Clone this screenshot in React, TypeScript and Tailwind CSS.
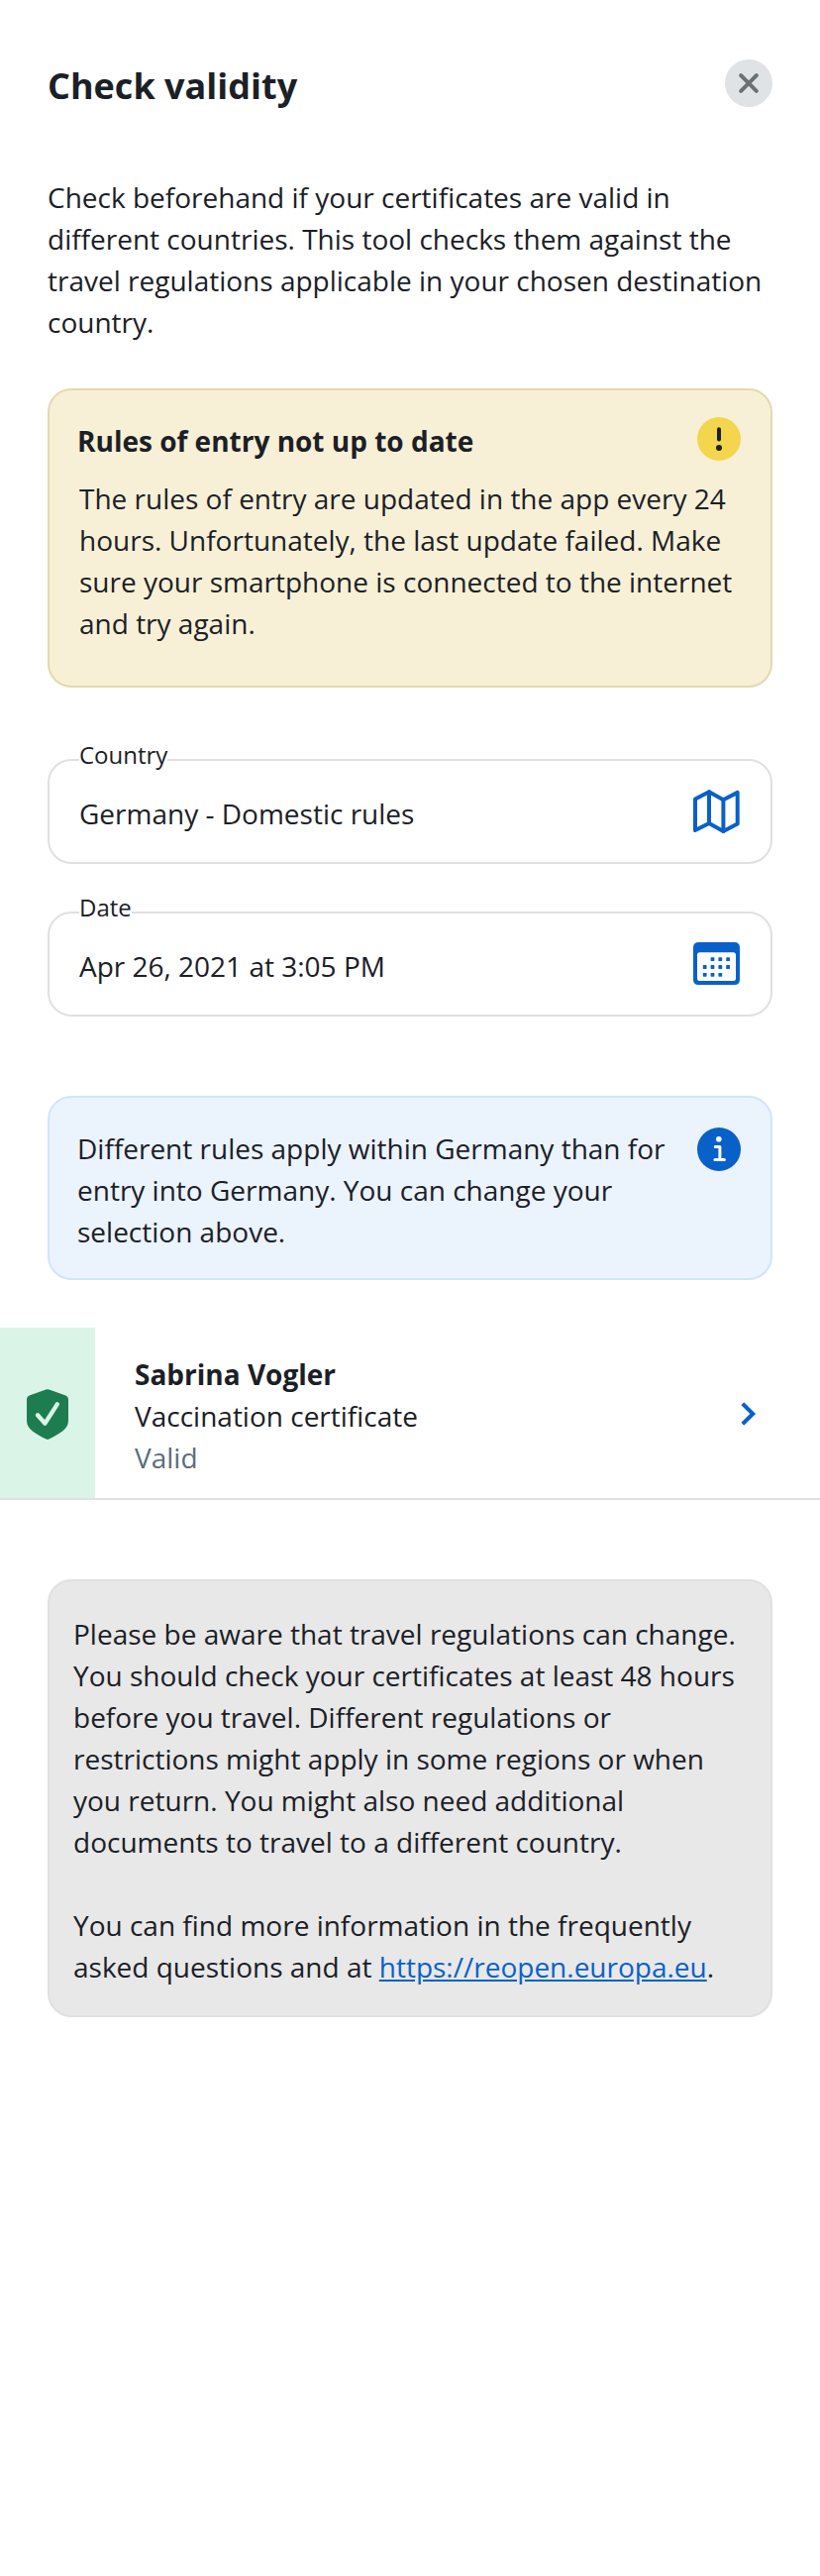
import React from "react";

function CloseIcon() {
  return (
    <svg width="48" height="48" viewBox="0 0 48 48" fill="none">
      <path d="M16.2 16.2 L31.8 31.8 M31.8 16.2 L16.2 31.8" stroke="#6a7271" strokeWidth="4" strokeLinecap="round" />
    </svg>
  );
}

function WarningIcon() {
  return (
    <svg className="shrink-0" width="44" height="44" viewBox="0 0 44 44">
      <circle cx="22" cy="22" r="22" fill="#f3d54e" />
      <rect x="20" y="10.2" width="4" height="14.2" rx="2" fill="#1b2026" />
      <circle cx="22" cy="31" r="3" fill="#1b2026" />
    </svg>
  );
}

function InfoIcon() {
  return (
    <svg className="shrink-0" width="44" height="44" viewBox="0 0 44 44">
      <circle cx="22" cy="22" r="22" fill="#0861c8" />
      <circle cx="21.8" cy="11.7" r="2.8" fill="#fff" />
      <path d="M18.3 19.6 H22.9 V32.4 M17.9 32.4 H27.4" fill="none" stroke="#fff" strokeWidth="3" strokeLinecap="round" strokeLinejoin="round" />
    </svg>
  );
}

function MapIcon() {
  return (
    <svg className="shrink-0" width="48" height="46" viewBox="0 0 48 46" fill="none" stroke="#0861c8" strokeWidth="4" strokeLinejoin="round" strokeLinecap="round">
      <path d="M2 9.6 L16 2.3 L30.4 10.3 L44.7 2.9 V34.4 L30.4 42 L16 34 L2 41 Z" />
      <path d="M16 2.3 V34 M30.4 10.3 V42" />
    </svg>
  );
}

const calendarDots = [
  [19.5, 17], [27.3, 17], [35.1, 17],
  [11.7, 24.8], [19.5, 24.8], [27.3, 24.8], [35.1, 24.8],
  [11.7, 32.6], [19.5, 32.6], [27.3, 32.6],
];

function CalendarIcon() {
  return (
    <svg className="shrink-0" width="48" height="46" viewBox="0 0 48 46">
      <path fillRule="evenodd" fill="#0861c8" d="M5.5 0 H41.5 Q47 0 47 5.5 V37.5 Q47 43 41.5 43 H5.5 Q0 43 0 37.5 V5.5 Q0 0 5.5 0 Z M6.5 10.3 Q4 10.3 4 12.8 V36.5 Q4 39 6.5 39 H40.5 Q43 39 43 36.5 V12.8 Q43 10.3 40.5 10.3 Z" />
      {calendarDots.map(([x, y]) => (
        <rect key={x + "-" + y} x={x - 1.9} y={y - 1.7} width="3.8" height="3.8" rx="0.6" fill="#0861c8" />
      ))}
    </svg>
  );
}

function ShieldIcon() {
  return (
    <svg width="42" height="51" viewBox="0 0 42 51">
      <path fill="#1e7d50" d="M19.4 0.5 Q21 -0.1 22.6 0.5 L39.4 6.6 Q42 7.6 42 10.2 V32 C42 41 32 45.5 22.4 50.5 Q21 51.2 19.6 50.5 C10 45.5 0 41 0 32 V10.2 Q0 7.6 2.6 6.6 Z" />
      <path d="M11 26.3 L18.4 34.6 L30.8 15.4" fill="none" stroke="#daf5e7" strokeWidth="4.4" strokeLinecap="round" strokeLinejoin="round" />
    </svg>
  );
}

function Field({ label, value, icon }: { label: string; value: string; icon: React.ReactNode }) {
  return (
    <div className="relative flex h-[106px] items-start justify-between rounded-3xl border-2 border-[#e0e0e0] pr-[30px] pl-[30px] pt-[29px]">
      <span className="absolute -top-6 left-[30px] bg-white text-[24px] leading-[36px]">{label}</span>
      <span className="pt-[3px]">{value}</span>
      {icon}
    </div>
  );
}

export default function App() {
  return (
    <main className="min-h-[2600px] w-[828px] bg-white pt-[60px] font-['Open_Sans',sans-serif] text-[28px] leading-[42px] text-[#1b2026]">
      <header className="flex h-[118px] items-start justify-between px-12">
        <h1 className="text-[36px] leading-[54px] font-bold">Check validity</h1>
        <button aria-label="Close" className="h-12 w-12 rounded-full bg-[#dfe3e6]">
          <CloseIcon />
        </button>
      </header>

      <div className="px-12">
        <p>
          Check beforehand if your certificates are valid in<br />
          different countries. This tool checks them against the<br />
          travel regulations applicable in your chosen destination<br />
          country.
        </p>

        <section className="mt-[46px] h-[302px] rounded-3xl border-2 border-[#e3d9ae] bg-[#f8f0d6] pt-[27px] pr-[30px] pl-7">
          <div className="flex items-start justify-between">
            <h2 className="pt-[3px] font-bold">Rules of entry not up to date</h2>
            <WarningIcon />
          </div>
          <p className="mt-4 ml-[2px] whitespace-nowrap">
            The rules of entry are updated in the app every 24<br />
            hours. Unfortunately, the last update failed. Make<br />
            sure your smartphone is connected to the internet<br />
            and try again.
          </p>
        </section>

        <div className="mt-[72px] flex flex-col gap-12">
          <Field label="Country" value="Germany - Domestic rules" icon={<MapIcon />} />
          <Field label="Date" value="Apr 26, 2021 at 3:05 PM" icon={<CalendarIcon />} />
        </div>

        <section className="mt-20 flex h-[186px] items-start justify-between rounded-3xl border-2 border-[#d0e5fc] bg-[#ebf3fd] pt-[30px] pr-[30px] pl-7">
          <p className="whitespace-nowrap">
            Different rules apply within Germany than for<br />
            entry into Germany. You can change your<br />
            selection above.
          </p>
          <InfoIcon />
        </section>
      </div>

      <section className="mt-12 flex h-[174px] border-b-2 border-[#e0e0e0]">
        <div className="flex w-24 items-center justify-center bg-[#daf5e7] pt-[3px]">
          <ShieldIcon />
        </div>
        <div className="flex-1 pt-[26px] pl-10">
          <h3 className="font-bold">Sabrina Vogler</h3>
          <p>Vaccination certificate</p>
          <p className="text-[#5b6d7d]">Valid</p>
        </div>
        <svg className="mt-[75px] mr-16 shrink-0" width="16" height="24" viewBox="0 0 16 24" fill="none">
          <path d="M1.8 1.8 L12.2 12 L1.8 22.2" stroke="#0861c8" strokeWidth="4" />
        </svg>
      </section>

      <section className="mx-12 mt-20 h-[442px] rounded-3xl border-2 border-[#e0e0e0] bg-[#e8e8e8] pt-8 pl-6 whitespace-nowrap">
        <p>
          Please be aware that travel regulations can change.<br />
          You should check your certificates at least 48 hours<br />
          before you travel. Different regulations or<br />
          restrictions might apply in some regions or when<br />
          you return. You might also need additional<br />
          documents to travel to a different country.
        </p>
        <p className="mt-[42px]">
          You can find more information in the frequently<br />
          asked questions and at{" "}
          <a className="text-[#0861c8] underline" href="https://reopen.europa.eu">https://reopen.europa.eu</a>.
        </p>
      </section>
    </main>
  );
}
